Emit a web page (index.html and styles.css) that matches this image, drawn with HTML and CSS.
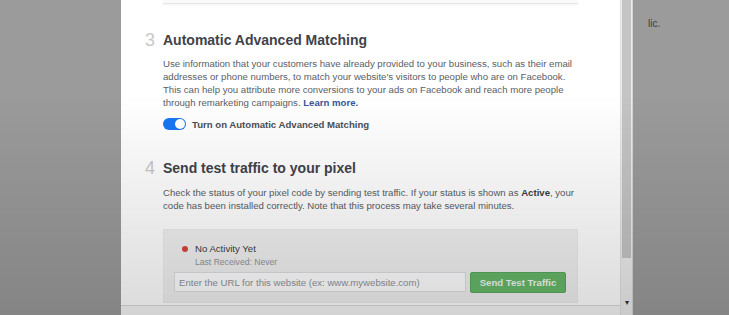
FILE: index.html
```html
<!DOCTYPE html>
<html lang="en">
<head>
  <meta charset="UTF-8">
  <title>Pixel Setup</title>
  <link rel="stylesheet" href="styles.css">
</head>
<body>
  <div class="page">
    <div class="backdrop-left"></div>

    <div class="modal">
      <div class="modal-body">
        <div class="prev-card"></div>

        <section class="step step-3">
          <div class="step-num">3</div>
          <div class="step-main">
            <h3>Automatic Advanced Matching</h3>
            <p>Use information that your customers have already provided to your business, such as their email addresses or phone numbers, to match your website's visitors to people who are on Facebook. This can help you attribute more conversions to your ads on Facebook and reach more people through remarketing campaigns. <a href="#">Learn more.</a></p>
            <label class="toggle-row">
              <span class="toggle"><span class="knob"></span></span>
              <span class="toggle-label">Turn on Automatic Advanced Matching</span>
            </label>
          </div>
        </section>

        <section class="step step-4">
          <div class="step-num">4</div>
          <div class="step-main">
            <h3>Send test traffic to your pixel</h3>
            <p>Check the status of your pixel code by sending test traffic. If your status is shown as <b>Active</b>, your code has been installed correctly. Note that this process may take several minutes.</p>
            <div class="test-box">
              <div class="status">
                <span class="dot"></span>
                <div>
                  <div class="status-title">No Activity Yet</div>
                  <div class="status-sub">Last Received: Never</div>
                </div>
              </div>
              <div class="test-form">
                <input type="text" placeholder="Enter the URL for this website (ex: www.mywebsite.com)">
                <button>Send Test Traffic</button>
              </div>
            </div>
          </div>
        </section>

        <div class="modal-footer"></div>
      </div>

      <div class="scrollbar">
        <div class="thumb"></div>
        <div class="arrow">&#9662;</div>
      </div>
    </div>

    <div class="backdrop-right">
      <span class="peek">lic.</span>
    </div>
  </div>
  <div class="shade"></div>
</body>
</html>
```

FILE: styles.css
```css
* { box-sizing: border-box; }

body {
  margin: 0;
  background: #9b9b9b;
  font-family: "Liberation Sans", Arial, sans-serif;
  overflow: hidden;
}

.page {
  display: flex;
  height: 315px;
}

.backdrop-left { width: 121px; background: #9b9b9b; }

.modal {
  width: 512px;
  display: flex;
  background: #fff;
}

.modal-body {
  flex: 1;
  padding: 0 42px 0 24px;
  display: flex;
  flex-direction: column;
}

.prev-card {
  height: 4px;
  margin-left: 18px;
  background: #fafafa;
  border-bottom: 1px solid #e6e6e6;
  box-shadow: 0 1px 2px rgba(0,0,0,0.05);
}

.step { display: flex; }
.step-3 { margin-top: 27px; }
.step-4 { margin-top: 29px; }

.step-num {
  width: 18px;
  font-size: 18px;
  line-height: 18px;
  color: #c8c8c8;
}

.step-main { flex: 1; }

.step h3 {
  margin: 0;
  font-size: 14px;
  line-height: 18px;
  color: #3f434a;
}

.step p {
  margin: 8px 0 0;
  font-size: 9.6px;
  line-height: 13px;
  color: #5a5e66;
}

.step-4 p { margin-top: 9px; }

.step p a { color: #365899; font-weight: bold; text-decoration: none; }
.step p b { color: #3b3e44; }

.toggle-row {
  display: flex;
  align-items: center;
  margin-top: 9px;
}

.toggle {
  position: relative;
  width: 23px;
  height: 12px;
  border-radius: 6px;
  background: #1877f2;
}

.knob {
  position: absolute;
  right: 1px;
  top: 1px;
  width: 10px;
  height: 10px;
  border-radius: 50%;
  background: #fff;
}

.toggle-label {
  margin-left: 6px;
  font-size: 9.6px;
  font-weight: bold;
  color: #4b4f56;
}

.test-box {
  margin-top: 17px;
  background: #f1f1f1;
  border: 1px solid #ececec;
  padding: 13px 11px 9px 10px;
}

.status {
  display: flex;
  align-items: flex-start;
  padding-left: 8px;
}

.dot {
  width: 6px;
  height: 6px;
  margin-top: 3px;
  margin-right: 7px;
  border-radius: 50%;
  background: #d9453c;
}

.status-title { font-size: 9.6px; line-height: 12px; color: #3b3e44; }
.status-sub { margin-top: 2px; font-size: 8.6px; line-height: 11px; color: #90949c; }

.test-form {
  display: flex;
  gap: 4px;
  margin-top: 4px;
}

.test-form input {
  flex: 1;
  height: 20px;
  padding: 0 4px;
  border: 1px solid #dddfe2;
  background: #fff;
  font-family: inherit;
  font-size: 9.6px;
}

.test-form input::placeholder { color: #90949c; }

.test-form button {
  width: 96px;
  height: 21px;
  border: 1px solid #5aa85f;
  border-radius: 2px;
  background: #67b868;
  color: #f2f8f2;
  font-family: inherit;
  font-size: 9.6px;
  font-weight: bold;
}

.modal-footer {
  margin: auto -42px 0 -24px;
  height: 10px;
  border-top: 1px solid #d8d8d8;
  background: #f6f6f6;
}

.scrollbar {
  position: relative;
  width: 13px;
  background: #ececec;
  border-left: 1px solid #e0e0e0;
  border-right: 1px solid #d5d5d5;
}

.thumb {
  margin: 0 1px;
  height: 258px;
  background: #c4c4c4;
}

.arrow {
  position: absolute;
  left: 0;
  right: 0;
  bottom: 8px;
  text-align: center;
  font-size: 8px;
  line-height: 8px;
  color: #333;
}

.backdrop-right {
  flex: 1;
  background: #9b9b9b;
  padding: 13px 0 0 15px;
}

.peek { font-size: 10px; color: #3c3c3c; }

.shade {
  position: fixed;
  inset: 0;
  pointer-events: none;
  background: linear-gradient(to bottom, rgba(0,0,0,0) 0, rgba(0,0,0,0) 30%, rgba(0,0,0,0.14) 100%);
}
```
